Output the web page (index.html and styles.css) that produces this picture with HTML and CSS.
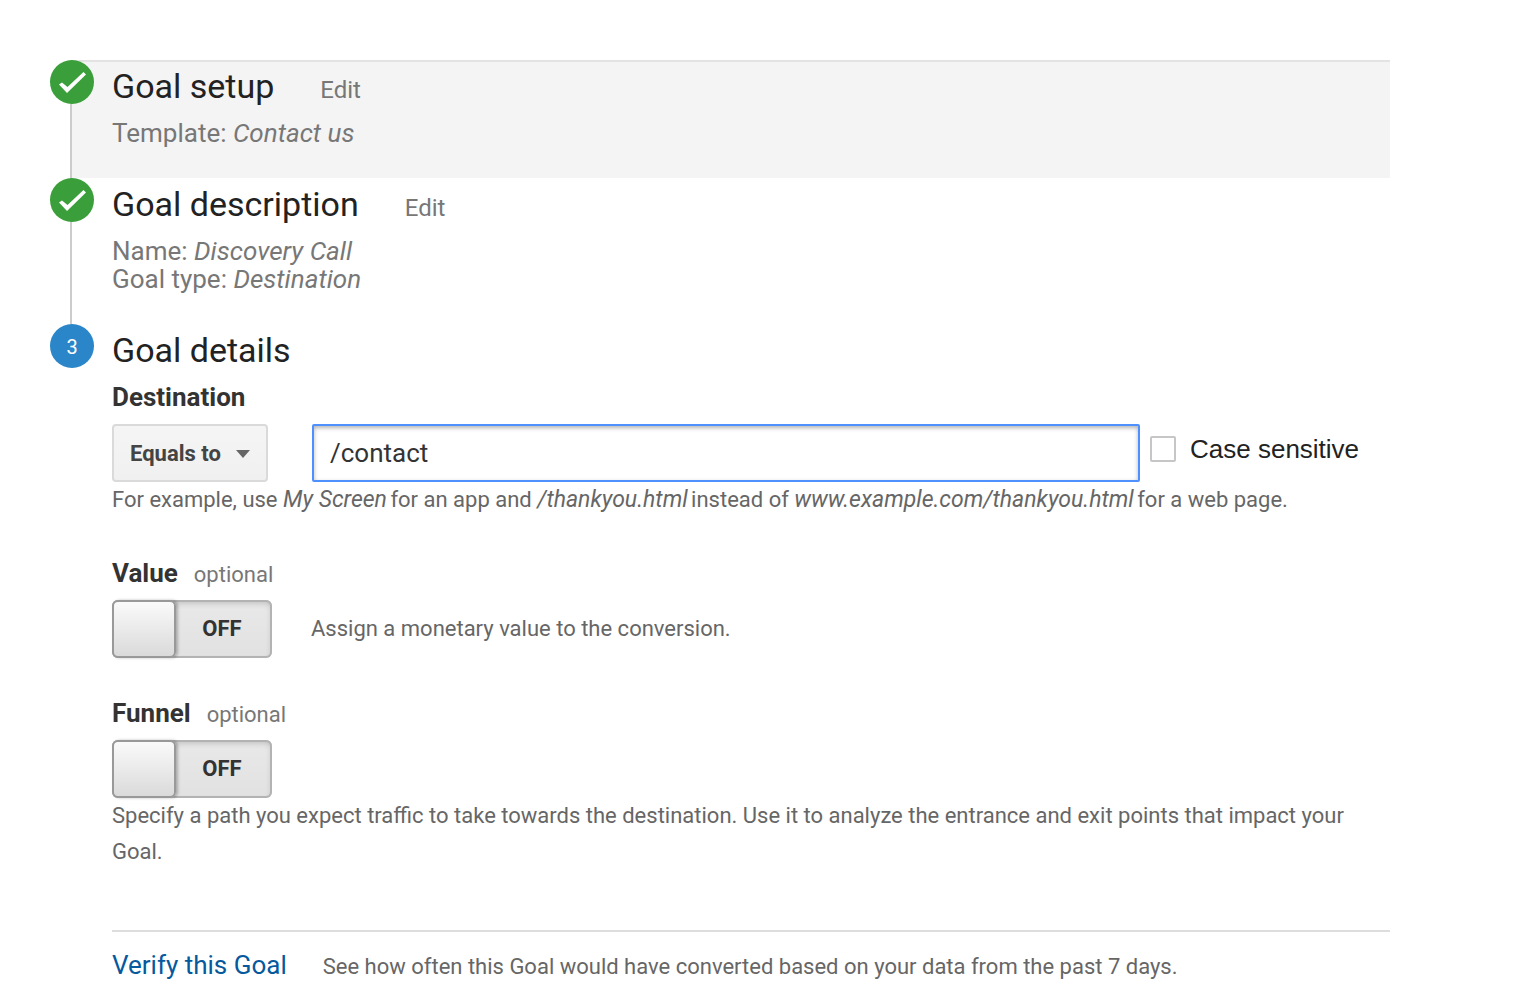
FILE: index.html
```html
<!DOCTYPE html>
<html lang="en">
<head>
<meta charset="utf-8">
<meta name="viewport" content="width=device-width, initial-scale=1">
<title>Goal details</title>
<link rel="stylesheet" href="styles.css">
</head>
<body>
<form class="wizard">
  <section class="step step-shaded">
    <div class="marker">
      <svg class="badge" viewBox="0 0 44 44" aria-hidden="true"><circle cx="22" cy="22" r="22" fill="#3a9f3a"/><path d="M9 24.500L12 22.500L17.500 27L33.500 12L36 14.500L17 33Z" fill="#fff"/></svg>
    </div>
    <div class="content">
      <div class="heading"><h2 class="title">Goal setup</h2><a class="edit" href="#setup">Edit</a></div>
      <p class="summary">Template: <em>Contact us</em></p>
    </div>
  </section>

  <section class="step">
    <div class="marker">
      <svg class="badge" viewBox="0 0 44 44" aria-hidden="true"><circle cx="22" cy="22" r="22" fill="#3a9f3a"/><path d="M9 24.500L12 22.500L17.500 27L33.500 12L36 14.500L17 33Z" fill="#fff"/></svg>
    </div>
    <div class="content">
      <div class="heading"><h2 class="title">Goal description</h2><a class="edit" href="#description">Edit</a></div>
      <p class="summary">Name: <em>Discovery Call</em></p>
      <p class="summary">Goal type: <em>Destination</em></p>
    </div>
  </section>

  <section class="step step-current">
    <div class="marker"><span class="badge badge-number">3</span></div>
    <div class="content">
      <div class="heading"><h2 class="title">Goal details</h2></div>

      <div class="field">
        <label class="label" for="destination">Destination</label>
        <div class="match">
          <div class="dropdown">
            <select class="select" aria-label="Match type"><option>Equals to</option></select>
            <svg class="arrow" viewBox="0 0 14 8" aria-hidden="true"><path d="M0 0H14L7 8Z" fill="#666"/></svg>
          </div>
          <input class="path" id="destination" type="text" value="/contact">
          <label class="case"><input class="tick" type="checkbox">Case sensitive</label>
        </div>
        <p class="help">For example, use <em>My Screen</em> for an app and <em>/thankyou.html</em> instead of <em>www.example.com/thankyou.html</em> for a web page.</p>
      </div>

      <div class="field">
        <div class="caption"><label class="label" for="value">Value</label><span class="optional">optional</span></div>
        <div class="switch-row">
          <label class="toggle"><input class="knob" id="value" type="checkbox"><span class="state">OFF</span></label>
          <p class="help">Assign a monetary value to the conversion.</p>
        </div>
      </div>

      <div class="field">
        <div class="caption"><label class="label" for="funnel">Funnel</label><span class="optional">optional</span></div>
        <div class="switch-row">
          <label class="toggle"><input class="knob" id="funnel" type="checkbox"><span class="state">OFF</span></label>
        </div>
        <p class="help">Specify a path you expect traffic to take towards the destination. Use it to analyze the entrance and exit points that impact your Goal.</p>
      </div>

      <div class="verify">
        <a class="verify-link" href="#verify">Verify this Goal</a>
        <p class="help">See how often this Goal would have converted based on your data from the past 7 days.</p>
      </div>
    </div>
  </section>
</form>
</body>
</html>
```
FILE: styles.css
```css
* { box-sizing: border-box; }

body {
  margin: 0;
  background: #fff;
  color: #222;
  font-family: Roboto, sans-serif;
  font-size: 26px;
  line-height: 28px;
}

h2, p { margin: 0; }
a { text-decoration: none; }
em { line-height: 1; }

.wizard { padding: 60px 148px 0 50px; }

/* Steps: numbered markers joined by a vertical line */
.step {
  display: grid;
  grid-template-columns: 44px minmax(0, 1fr);
}

.marker {
  background: linear-gradient(#ccc, #ccc) 20px 0 / 2px 100% no-repeat;
}

.step-current .marker { background: none; }

.badge {
  display: block;
  width: 44px;
  height: 44px;
}

.badge-number {
  border-radius: 50%;
  background: #2a86c8;
  color: #fff;
  font-size: 20px;
  line-height: 46px;
  text-align: center;
}

.content {
  padding: 2px 0 31px 18px;
}

.step-shaded {
  background: linear-gradient(#e3e3e3, #e3e3e3) 22px 0 / 100% 2px no-repeat,
              linear-gradient(#f4f4f4, #f4f4f4) 22px 0 / 100% 100% no-repeat;
}

.step-current .content { padding-bottom: 16px; }

.heading {
  display: flex;
  align-items: baseline;
  gap: 46px;
  margin-bottom: 9px;
}

.title {
  font-size: 34px;
  font-weight: 400;
  line-height: 48px;
}

.edit {
  color: #777;
  font-size: 24px;
}

.summary { color: #777; }

/* Fields */
.field { margin-bottom: 41px; }

.label {
  display: block;
  color: #333;
  font-weight: 700;
}

.caption {
  display: flex;
  align-items: baseline;
  gap: 16px;
}

.optional {
  color: #777;
  font-size: 22px;
  line-height: 24px;
}

.help {
  color: #666;
  font-size: 22px;
  line-height: 36px;
}

.help em {
  margin-right: -2px;
  font-size: 23px;
}

.match {
  display: flex;
  margin-top: 13px;
}

.dropdown {
  position: relative;
  width: 156px;
  margin-right: 44px;
}

.select {
  appearance: none;
  width: 100%;
  height: 58px;
  padding: 0 16px;
  border: 2px solid #dadada;
  border-radius: 4px;
  background: linear-gradient(#f5f5f5, #f0f0f0);
  color: #444;
  font: 700 22px Roboto, sans-serif;
}

.arrow {
  position: absolute;
  top: 26px;
  right: 18px;
  width: 14px;
  height: 8px;
  pointer-events: none;
}

.path {
  flex: 1;
  min-width: 0;
  height: 58px;
  padding: 0 16px;
  border: 2px solid #4d90fe;
  border-radius: 2px;
  outline: 0;
  background: #fff;
  box-shadow: inset 0 2px 4px rgba(0, 0, 0, 0.3);
  color: #333;
  font: 26px Roboto, sans-serif;
}

.case {
  display: flex;
  align-items: center;
  gap: 14px;
  width: 250px;
  height: 50px;
  padding-left: 10px;
  font-family: "Liberation Sans", sans-serif;
}

.tick {
  appearance: none;
  width: 26px;
  height: 26px;
  margin: 0;
  border: 2px solid #c6c6c6;
  border-radius: 2px;
}

/* On/off switches */
.switch-row {
  display: flex;
  align-items: center;
  gap: 39px;
  margin-top: 13px;
}

.toggle {
  display: flex;
  width: 160px;
  height: 58px;
  border-radius: 6px;
  background: linear-gradient(#e9e9e9, #e1e1e1);
  box-shadow: inset 0 0 0 2px #b3b3b3, inset 0 3px 6px rgba(0, 0, 0, 0.2);
}

.knob {
  appearance: none;
  width: 64px;
  height: 58px;
  margin: 0;
  border: 2px solid #999;
  border-radius: 6px;
  background: linear-gradient(#fafafa, #dadada);
  box-shadow: 2px 0 3px rgba(0, 0, 0, 0.25);
}

.state {
  flex: 1;
  padding-right: 4px;
  color: #333;
  font-size: 22px;
  font-weight: 700;
  line-height: 57px;
  text-align: center;
}

.verify {
  display: flex;
  align-items: baseline;
  gap: 36px;
  margin-top: 60px;
  padding-top: 17px;
  border-top: 2px solid #ddd;
}

.verify-link { color: #05599c; }
```
